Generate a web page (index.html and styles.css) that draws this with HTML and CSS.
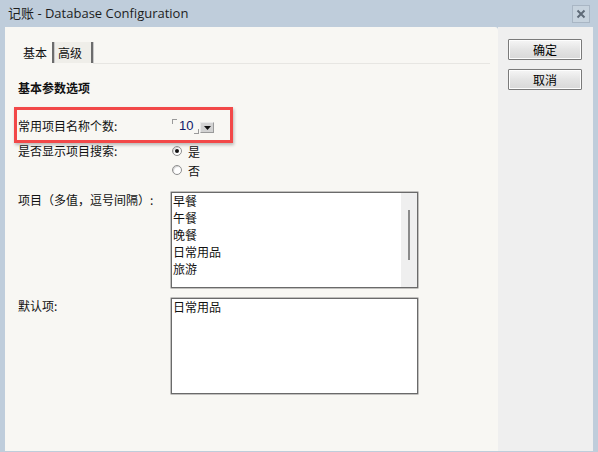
FILE: index.html
```html
<!DOCTYPE html>
<html lang="zh-CN">
<head>
<meta charset="utf-8">
<title>记账 - Database Configuration</title>
<link rel="stylesheet" href="styles.css">
</head>
<body>
<div class="window">
  <div class="titlebar">
    <span class="title">记账 - Database Configuration</span>
    <span class="close">
      <svg width="10" height="10" viewBox="0 0 10 10"><path d="M1.5 1.5 L8.5 8.5 M8.5 1.5 L1.5 8.5" stroke="#5f6b78" stroke-width="2"/></svg>
    </span>
  </div>
  <div class="frame">
    <div class="content">
      <div class="tabs">
        <div class="tab active">基本</div>
        <div class="tab">高级</div>
        <div class="tabline"></div>
      </div>
      <div class="heading">基本参数选项</div>
      <div class="form">
        <div class="row row1">
          <div class="label">常用项目名称个数:</div>
          <div class="spin">
            <span class="corner tl"></span>
            <span class="num">10</span>
            <span class="corner br"></span>
            <span class="drop"><svg width="7" height="4" viewBox="0 0 7 4"><path d="M0 0 H7 L3.5 4 Z" fill="#111"/></svg></span>
          </div>
          <div class="highlight"></div>
        </div>
        <div class="row row2">
          <div class="label">是否显示项目搜索:</div>
          <div class="radios">
            <div class="radio-item"><span class="radio checked"></span><span>是</span></div>
            <div class="radio-item"><span class="radio"></span><span>否</span></div>
          </div>
        </div>
        <div class="row row3">
          <div class="label">项目（多值，逗号间隔）:</div>
          <div class="box">
            <div class="lines">
              <div>早餐</div>
              <div>午餐</div>
              <div>晚餐</div>
              <div>日常用品</div>
              <div>旅游</div>
            </div>
            <div class="scrollbar"><div class="thumb"></div></div>
          </div>
        </div>
        <div class="row row4">
          <div class="label">默认项:</div>
          <div class="box">
            <div class="lines"><div>日常用品</div></div>
          </div>
        </div>
      </div>
    </div>
    <div class="side">
      <button class="btn">确定</button>
      <button class="btn">取消</button>
    </div>
  </div>
</div>
</body>
</html>
```

FILE: styles.css
```css
* { box-sizing: border-box; }
html, body {
  margin: 0;
  padding: 0;
  width: 598px;
  height: 452px;
  overflow: hidden;
  background: #bfcddb;
  font-family: "Noto Sans CJK SC", "Noto Sans", sans-serif;
  font-size: 12px;
  color: #111;
}
.window {
  display: flex;
  flex-direction: column;
  width: 598px;
  height: 452px;
}
.titlebar {
  height: 27px;
  display: flex;
  align-items: center;
  padding-left: 8px;
  position: relative;
}
.title {
  font-family: "Open Sans", "Noto Sans CJK SC", sans-serif;
  font-size: 13px;
  color: #1d1d1d;
  line-height: 16px;
  margin-top: -1px;
}
.close {
  position: absolute;
  left: 572px;
  top: 5px;
  width: 18px;
  height: 18px;
  border: 1px solid #a9b6c4;
  background: #c7d3de;
  display: flex;
  align-items: center;
  justify-content: center;
}
.frame {
  flex: 1;
  display: flex;
  padding: 0 5px 1px 5px;
}
.content {
  width: 493px;
  background: #f8f7f3;
  border-top-right-radius: 3px;
  padding: 15px 0 0 13px;
  display: flex;
  flex-direction: column;
}
.side {
  width: 95px;
  background: #efefef;
  padding: 12px 0 0 10px;
  display: flex;
  flex-direction: column;
  gap: 9px;
}
.btn {
  width: 74px;
  height: 21px;
  padding: 0;
  font-family: "Noto Sans CJK SC", sans-serif;
  font-size: 12px;
  line-height: 17px;
  color: #000;
  border: 1px solid #7a7a7a;
  border-radius: 1px;
  background: linear-gradient(#f6f6f6, #e4e4e4 50%, #d8d8d8);
  box-shadow: inset 0 0 0 1px #fdfdfd;
}
.tabs {
  display: flex;
  align-items: stretch;
  height: 23px;
}
.tab {
  height: 21px;
  line-height: 21px;
  padding: 0 4px;
  border-right: 2px solid #6c6c6c;
  box-shadow: 1px 0 0 #c9c9c9;
  font-size: 12px;
}
.tab.active {
  width: 36px;
  padding-left: 5px;
}
.tab:not(.active) {
  width: 38px;
  margin-left: 1px;
  background: #efeee9;
  padding-left: 3px;
}
.tabline {
  flex: 1;
  margin-right: 8px;
  align-self: flex-end;
  height: 1px;
  margin-bottom: 1px;
  background: #e7e6e2;
}
.heading {
  margin-top: 15px;
  font-weight: bold;
  font-size: 12px;
  line-height: 16px;
}
.form {
  display: flex;
  flex-direction: column;
}
.row {
  display: flex;
  position: relative;
}
.label {
  width: 153px;
  line-height: 16px;
  flex: none;
}
.row1 {
  margin-top: 22px;
  height: 16px;
}
.row2 {
  margin-top: 9px;
}
.row3 {
  margin-top: 14px;
}
.row4 {
  margin-top: 10px;
}
.highlight {
  position: absolute;
  left: -4px;
  top: -11px;
  width: 219px;
  height: 36px;
  border: 3px solid #f24848;
  box-shadow: 1px 2px 3px rgba(0,0,0,0.25);
  pointer-events: none;
}
.spin {
  display: flex;
  align-items: center;
  height: 16px;
  position: relative;
  width: 46px;
}
.corner {
  width: 5px;
  height: 5px;
  border-color: #9a9a9a;
  border-style: solid;
  align-self: flex-start;
}
.corner.tl {
  border-width: 1px 0 0 1px;
  margin-top: 1px;
  margin-left: 1px;
}
.corner.br {
  border-width: 0 1px 1px 0;
  align-self: flex-end;
  margin-bottom: 0;
}
.num {
  font-family: "Liberation Sans", Arial, sans-serif;
  font-size: 13px;
  color: #10186a;
  line-height: 16px;
  padding: 0 1px 0 2px;
}
.drop {
  width: 14px;
  height: 11px;
  background: #d2d2d2;
  border: 1px solid #e9e9e9;
  border-right-color: #9a9a9a;
  border-bottom-color: #9a9a9a;
  display: flex;
  align-items: center;
  justify-content: center;
  margin-left: 1px;
  margin-top: 3px;
}
.radios {
  display: flex;
  flex-direction: column;
  gap: 3px;
}
.radio-item {
  display: flex;
  align-items: center;
  height: 16px;
  gap: 6px;
  margin-left: 1px;
}
.radio {
  width: 10px;
  height: 10px;
  border-radius: 50%;
  border: 1px solid #8e8e8e;
  background: #fff;
  position: relative;
  box-shadow: inset 1px 1px 1px #d0d0d0;
}
.radio.checked::after {
  content: "";
  position: absolute;
  left: 2px;
  top: 2px;
  width: 4px;
  height: 4px;
  border-radius: 50%;
  background: #111;
}
.box {
  width: 247px;
  height: 96px;
  border: 1px solid #6a6a6a;
  box-shadow: 0 0 0 0.5px #8a8a8a;
  background: #fff;
  display: flex;
}
.lines {
  flex: 1;
  padding-left: 1px;
  line-height: 17px;
  font-size: 12px;
  margin-top: -1px;
}
.scrollbar {
  width: 16px;
  background: #efefef;
  position: relative;
}
.thumb {
  position: absolute;
  left: 7px;
  top: 17px;
  width: 2px;
  height: 50px;
  background: #8a8a8a;
}
```
